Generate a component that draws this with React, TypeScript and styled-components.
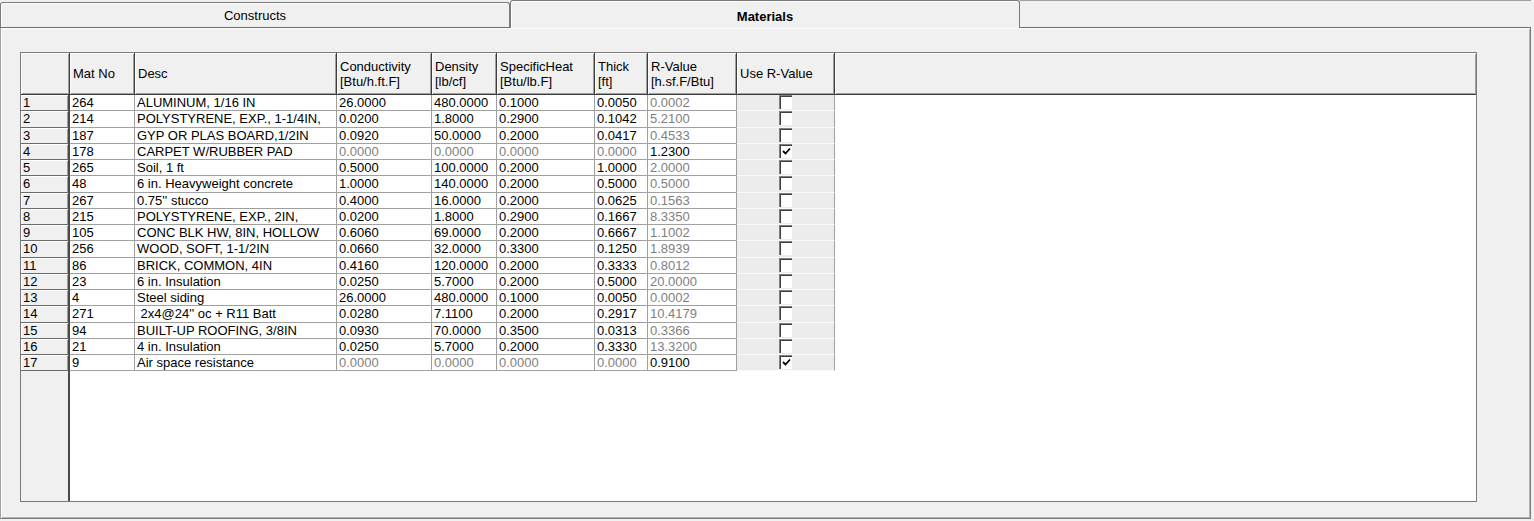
import styled, { createGlobalStyle } from 'styled-components';

const GlobalStyle = createGlobalStyle`
  html, body {
    margin: 0;
    padding: 0;
    background: #f0f0f0;
  }
  body {
    font-family: "Liberation Sans", Arial, sans-serif;
    font-size: 13px;
    color: #000;
  }
`;

const ROW_H = 16.25;

const Window = styled.div`
  width: 1531px;
  display: flex;
  flex-direction: column;
`;

const TabStrip = styled.div`
  display: flex;
  height: 28px;
`;

const Tab = styled.div<{ $active?: boolean }>`
  width: 510px;
  box-sizing: border-box;
  margin-top: ${(p) => (p.$active ? '0' : '2px')};
  padding-top: ${(p) => (p.$active ? '4px' : '0')};
  display: flex;
  align-items: center;
  justify-content: center;
  background: #f0f0f0;
  border: 1px solid #7a7a7a;
  border-bottom: ${(p) => (p.$active ? 'none' : '1px solid #6f6f6f')};
  border-radius: 3px 3px 0 0;
  box-shadow: inset 1px 1px 0 #fff;
  font-weight: ${(p) => (p.$active ? 700 : 400)};
`;

const TabFill = styled.div`
  flex: 1;
  border-top: 1px solid #a0a0a0;
  border-bottom: 1px solid #6f6f6f;
`;

const Panel = styled.div`
  height: 491px;
  box-sizing: border-box;
  padding: 24px 0 0 19px;
  border-left: 1px solid #a0a0a0;
  border-right: 1px solid #7a7a7a;
  border-bottom: 1px solid #7a7a7a;
  box-shadow: inset 1px 1px 0 #fff, inset -1px -1px 0 #b4b4b4;
`;

const Grid = styled.div`
  width: 1457px;
  height: 450px;
  box-sizing: border-box;
  border: 1px solid #7a7a7a;
  background: #fff;
  display: flex;
  flex-direction: column;
  overflow: hidden;
`;

const HeaderRow = styled.div`
  display: flex;
  height: 42px;
  flex-shrink: 0;
`;

const HeadCell = styled.div<{ $w?: number }>`
  width: ${(p) => (p.$w ? `${p.$w}px` : 'auto')};
  flex: ${(p) => (p.$w ? '0 0 auto' : '1')};
  box-sizing: border-box;
  padding: 0 3px;
  display: flex;
  align-items: center;
  background: #f0f0f0;
  border-right: ${(p) => (p.$w ? '1px solid #3c3c3c' : 'none')};
  border-bottom: 1px solid #3c3c3c;
  box-shadow: inset 1px 1px 0 #fff, inset -1px -1px 0 #a0a0a0;
  line-height: 15px;
  white-space: pre-line;
`;

const Body = styled.div`
  flex: 1;
  display: flex;
  flex-direction: column;
`;

const Row = styled.div`
  display: flex;
  height: ${ROW_H}px;
  flex-shrink: 0;
`;

const RowHead = styled.div`
  width: 49px;
  box-sizing: border-box;
  padding-left: 2px;
  background: #f0f0f0;
  border-right: 2px solid #4a4a4a;
  border-bottom: 1px solid #6a6a6a;
  box-shadow: inset 1px 1px 0 #fff, inset -1px 0 0 #a0a0a0;
  line-height: 15px;
`;

const Cell = styled.div<{ $w: number; $dim?: boolean }>`
  width: ${(p) => p.$w}px;
  box-sizing: border-box;
  padding-left: 2px;
  border-right: 1px solid #a0a0a0;
  border-bottom: 1px solid #a0a0a0;
  color: ${(p) => (p.$dim ? '#808080' : '#000')};
  line-height: 15px;
  white-space: pre;
  overflow: hidden;
`;

const CheckCell = styled.div`
  width: 98px;
  box-sizing: border-box;
  display: flex;
  justify-content: center;
  background: #ececec;
  border-right: 1px solid #a0a0a0;
  border-bottom: 1px solid #fafafa;
`;

const CheckBox = styled.div`
  width: 13px;
  height: 14px;
  box-sizing: border-box;
  display: flex;
  align-items: center;
  justify-content: center;
  background: #fff;
  border-top: 1px solid #808080;
  border-left: 1px solid #808080;
  box-shadow: inset 1px 1px 0 #404040;
`;

const Spacer = styled.div`
  flex: 1;
  display: flex;
`;

const RowHeadStub = styled.div`
  width: 49px;
  box-sizing: border-box;
  background: #f0f0f0;
  border-right: 2px solid #4a4a4a;
`;

type Material = {
  no: string;
  desc: string;
  cond: string;
  dens: string;
  spec: string;
  thick: string;
  rval: string;
  useR?: boolean;
};

const columns: { key: keyof Material; title: string; w: number }[] = [
  { key: 'no', title: 'Mat No', w: 65 },
  { key: 'desc', title: 'Desc', w: 202 },
  { key: 'cond', title: 'Conductivity\n[Btu/h.ft.F]', w: 95 },
  { key: 'dens', title: 'Density\n[lb/cf]', w: 65 },
  { key: 'spec', title: 'SpecificHeat\n[Btu/lb.F]', w: 98 },
  { key: 'thick', title: 'Thick\n[ft]', w: 53 },
  { key: 'rval', title: 'R-Value\n[h.sf.F/Btu]', w: 89 },
];

const materials: Material[] = [
  { no: '264', desc: 'ALUMINUM, 1/16 IN', cond: '26.0000', dens: '480.0000', spec: '0.1000', thick: '0.0050', rval: '0.0002' },
  { no: '214', desc: 'POLYSTYRENE, EXP., 1-1/4IN,', cond: '0.0200', dens: '1.8000', spec: '0.2900', thick: '0.1042', rval: '5.2100' },
  { no: '187', desc: 'GYP OR PLAS BOARD,1/2IN', cond: '0.0920', dens: '50.0000', spec: '0.2000', thick: '0.0417', rval: '0.4533' },
  { no: '178', desc: 'CARPET W/RUBBER PAD', cond: '0.0000', dens: '0.0000', spec: '0.0000', thick: '0.0000', rval: '1.2300', useR: true },
  { no: '265', desc: 'Soil, 1 ft', cond: '0.5000', dens: '100.0000', spec: '0.2000', thick: '1.0000', rval: '2.0000' },
  { no: '48', desc: '6 in. Heavyweight concrete', cond: '1.0000', dens: '140.0000', spec: '0.2000', thick: '0.5000', rval: '0.5000' },
  { no: '267', desc: "0.75'' stucco", cond: '0.4000', dens: '16.0000', spec: '0.2000', thick: '0.0625', rval: '0.1563' },
  { no: '215', desc: 'POLYSTYRENE, EXP., 2IN,', cond: '0.0200', dens: '1.8000', spec: '0.2900', thick: '0.1667', rval: '8.3350' },
  { no: '105', desc: 'CONC BLK HW, 8IN, HOLLOW', cond: '0.6060', dens: '69.0000', spec: '0.2000', thick: '0.6667', rval: '1.1002' },
  { no: '256', desc: 'WOOD, SOFT, 1-1/2IN', cond: '0.0660', dens: '32.0000', spec: '0.3300', thick: '0.1250', rval: '1.8939' },
  { no: '86', desc: 'BRICK, COMMON, 4IN', cond: '0.4160', dens: '120.0000', spec: '0.2000', thick: '0.3333', rval: '0.8012' },
  { no: '23', desc: '6 in. Insulation', cond: '0.0250', dens: '5.7000', spec: '0.2000', thick: '0.5000', rval: '20.0000' },
  { no: '4', desc: 'Steel siding', cond: '26.0000', dens: '480.0000', spec: '0.1000', thick: '0.0050', rval: '0.0002' },
  { no: '271', desc: " 2x4@24'' oc + R11 Batt", cond: '0.0280', dens: '7.1100', spec: '0.2000', thick: '0.2917', rval: '10.4179' },
  { no: '94', desc: 'BUILT-UP ROOFING, 3/8IN', cond: '0.0930', dens: '70.0000', spec: '0.3500', thick: '0.0313', rval: '0.3366' },
  { no: '21', desc: '4 in. Insulation', cond: '0.0250', dens: '5.7000', spec: '0.2000', thick: '0.3330', rval: '13.3200' },
  { no: '9', desc: 'Air space resistance', cond: '0.0000', dens: '0.0000', spec: '0.0000', thick: '0.0000', rval: '0.9100', useR: true },
];

const layerKeys: (keyof Material)[] = ['cond', 'dens', 'spec', 'thick'];

function isDim(m: Material, key: keyof Material) {
  if (key === 'rval') return !m.useR;
  return !!m.useR && layerKeys.includes(key);
}

function Check() {
  return (
    <svg width="9" height="9" viewBox="0 0 9 9">
      <path d="M1 4 L3.5 6.5 L8 1.5" fill="none" stroke="#000" strokeWidth="1.8" />
    </svg>
  );
}

export default function App() {
  return (
    <>
      <GlobalStyle />
      <Window>
        <TabStrip>
          <Tab>Constructs</Tab>
          <Tab $active>Materials</Tab>
          <TabFill />
        </TabStrip>
        <Panel>
          <Grid>
            <HeaderRow>
              <HeadCell $w={49} />
              {columns.map((c) => (
                <HeadCell key={c.key} $w={c.w}>
                  {c.title}
                </HeadCell>
              ))}
              <HeadCell $w={98}>Use R-Value</HeadCell>
              <HeadCell />
            </HeaderRow>
            <Body>
              {materials.map((m, i) => (
                <Row key={i}>
                  <RowHead>{i + 1}</RowHead>
                  {columns.map((c) => (
                    <Cell key={c.key} $w={c.w} $dim={isDim(m, c.key)}>
                      {m[c.key]}
                    </Cell>
                  ))}
                  <CheckCell>
                    <CheckBox>{m.useR && <Check />}</CheckBox>
                  </CheckCell>
                </Row>
              ))}
              <Spacer>
                <RowHeadStub />
              </Spacer>
            </Body>
          </Grid>
        </Panel>
      </Window>
    </>
  );
}
